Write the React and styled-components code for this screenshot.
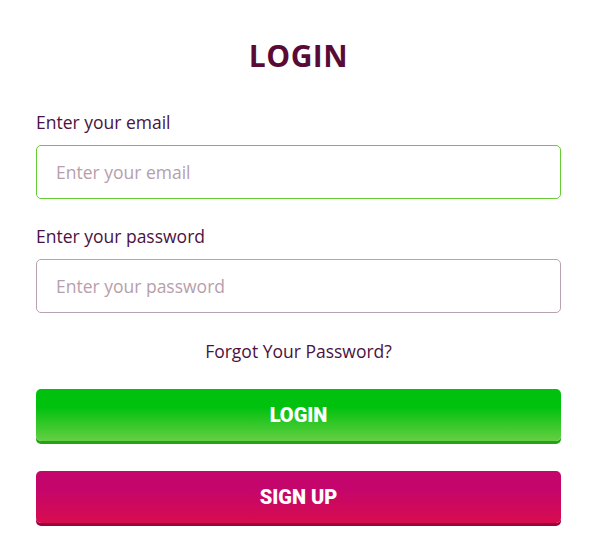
import React from 'react';
import styled, { createGlobalStyle } from 'styled-components';

const GlobalStyle = createGlobalStyle`
  body {
    margin: 0;
    background: #fff;
    font-family: 'Open Sans', 'Liberation Sans', sans-serif;
  }
`;

export default function App() {
  return (
    <>
      <GlobalStyle />
      <Styled.Root>
        <Title>LOGIN</Title>
        <Field>
          <Label htmlFor="email">Enter your email</Label>
          <Input id="email" type="email" placeholder="Enter your email" $focused autoFocus />
        </Field>
        <Field>
          <Label htmlFor="password">Enter your password</Label>
          <Input id="password" type="password" placeholder="Enter your password" />
        </Field>
        <Forgot href="#">Forgot Your Password?</Forgot>
        <Button $variant="login">LOGIN</Button>
        <Button $variant="signup">SIGN UP</Button>
      </Styled.Root>
    </>
  );
}

const variants = {
  login: {
    top: '#00c10e',
    bottom: '#66cf43',
    shadow: '#22a319',
  },
  signup: {
    top: '#c4066c',
    bottom: '#d80c4e',
    shadow: '#9d003e',
  },
};

const Styled = {
  Root: styled.div`
    width: 525px;
    margin: 0 38px 0 36px;
    padding-top: 36px;
    display: flex;
    flex-direction: column;
  `,
};

const Title = styled.h1`
  margin: 0 0 33px;
  text-align: center;
  font-size: 30px;
  font-weight: 700;
  letter-spacing: 0.5px;
  color: #5a0b35;
  line-height: 40px;
`;

const Field = styled.div`
  display: flex;
  flex-direction: column;
  margin-bottom: 24px;
`;

const Label = styled.label`
  font-size: 17.5px;
  line-height: 26px;
  color: #4b1242;
  margin-bottom: 10px;
`;

const Input = styled.input`
  box-sizing: border-box;
  height: 54px;
  padding: 0 19px;
  border: 1px solid ${(p) => (p.$focused ? '#66cc33' : '#b8a2af')};
  border-radius: 5px;
  font-family: inherit;
  font-size: 17.5px;
  color: #4b1242;
  caret-color: #5a0b35;
  outline: none;

  &::placeholder {
    color: #b79eab;
  }
`;

const Forgot = styled.a`
  align-self: center;
  margin: 1px 0 25px;
  font-size: 17.5px;
  line-height: 26px;
  color: #4b1242;
  text-decoration: none;
`;

const Button = styled.button`
  height: 52px;
  margin-bottom: 30px;
  border: none;
  border-radius: 5px;
  background: linear-gradient(
    to bottom,
    ${(p) => variants[p.$variant].top} 0%,
    ${(p) => variants[p.$variant].top} 35%,
    ${(p) => variants[p.$variant].bottom} 100%
  );
  box-shadow: 0 3px 0 ${(p) => variants[p.$variant].shadow};
  font-family: Roboto, 'Liberation Sans', sans-serif;
  font-weight: 900;
  font-size: 20px;
  color: #fff;
  cursor: pointer;
`;
